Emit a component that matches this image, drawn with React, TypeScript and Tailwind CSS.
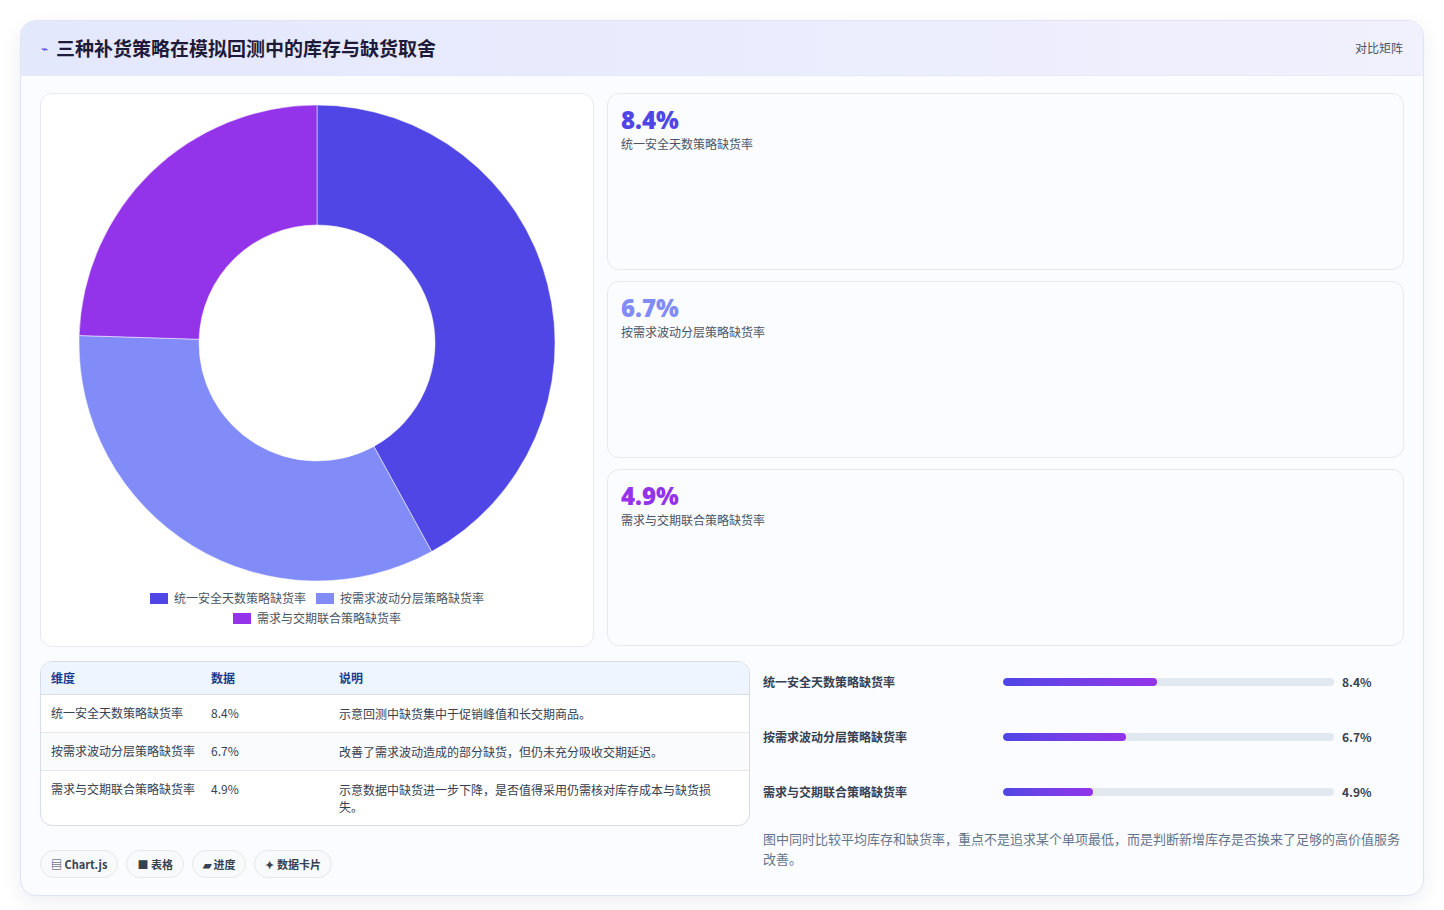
import React from "react"

const font = { fontFamily: '"Noto Sans CJK SC", "Noto Sans", sans-serif' }

const data = [
  { label: "统一安全天数策略缺货率", v: 8.4, color: "#4f46e5", note: "示意回测中缺货集中于促销峰值和长交期商品。" },
  { label: "按需求波动分层策略缺货率", v: 6.7, color: "#818cf8", note: "改善了需求波动造成的部分缺货，但仍未充分吸收交期延迟。" },
  { label: "需求与交期联合策略缺货率", v: 4.9, color: "#9333ea", note: "示意数据中缺货进一步下降，是否值得采用仍需核对库存成本与缺货损失。" },
]

function Donut() {
  const total = data.reduce((s, d) => s + d.v, 0)
  const cx = 238, cy = 238, R = 238, r = 118
  let a = -Math.PI / 2
  const pt = (rad: number, ang: number) => [cx + rad * Math.cos(ang), cy + rad * Math.sin(ang)]
  return (
    <svg width="476" height="476" viewBox="0 0 476 476">
      {data.map((d) => {
        const s = a
        const e = a + (d.v / total) * Math.PI * 2
        a = e
        const large = e - s > Math.PI ? 1 : 0
        const [x1, y1] = pt(R, s), [x2, y2] = pt(R, e), [x3, y3] = pt(r, e), [x4, y4] = pt(r, s)
        return (
          <path key={d.label} fill={d.color} stroke="#fff" strokeWidth="0.5"
            d={`M${x1} ${y1} A${R} ${R} 0 ${large} 1 ${x2} ${y2} L${x3} ${y3} A${r} ${r} 0 ${large} 0 ${x4} ${y4} Z`} />
        )
      })}
    </svg>
  )
}

export default function App() {
  return (
    <div className="min-h-[910px] bg-white p-5" style={font}>
      <div className="rounded-2xl border border-[#dfe3f5] bg-[#fbfcff] shadow-[0_6px_20px_rgba(30,40,90,0.08)] overflow-hidden">
        <div className="h-[55px] flex items-center justify-between px-5 bg-gradient-to-r from-[#e4e8fd] to-[#f1f0fd] border-b border-[#e6e9f7]">
          <div className="flex items-center gap-2">
            <span className="text-[#4f46e5] text-xs">⌁</span>
            <h1 className="text-[19px] font-bold text-[#1e1b3a]">三种补货策略在模拟回测中的库存与缺货取舍</h1>
          </div>
          <span className="text-xs text-[#4b5563]">对比矩阵</span>
        </div>
        <div className="px-[19px] pt-[17px] pb-[17px]">
          <div className="flex gap-[13px]">
            <div className="w-[554px] h-[554px] shrink-0 rounded-xl border border-[#e6e9f2] bg-white flex flex-col items-center pt-[11px]">
              <Donut />
              <div className="mt-[9px] flex flex-wrap justify-center gap-x-2.5 gap-y-1 w-[360px] text-xs text-[#4b5563]">
                {data.map((d) => (
                  <span key={d.label} className="flex items-center gap-1.5">
                    <span className="w-[18px] h-[11px]" style={{ background: d.color }} />
                    {d.label}
                  </span>
                ))}
              </div>
            </div>
            <div className="flex-1 flex flex-col gap-[11px]">
              {data.map((d) => (
                <div key={d.label} className="h-[177px] rounded-xl border border-[#e6e9f2] bg-[#fbfcff] px-[13px] pt-2.5">
                  <div className="text-[24px] font-extrabold leading-8" style={{ color: d.color, fontFamily: '"Open Sans", sans-serif' }}>{d.v}%</div>
                  <div className="text-xs text-[#4b5563]">{d.label}</div>
                </div>
              ))}
            </div>
          </div>
          <div className="flex gap-[13px] mt-[14px]">
            <div className="w-[710px] shrink-0">
              <div className="rounded-xl border border-[#d8dcea] overflow-hidden bg-white text-xs">
                <div className="flex h-[33px] items-center bg-[#eff5ff] border-b border-[#d8dcea] font-bold text-[#1e3a8a]">
                  <div className="w-[170px] pl-2.5">维度</div>
                  <div className="w-[128px]">数据</div>
                  <div className="flex-1">说明</div>
                </div>
                {data.map((d, i) => (
                  <div key={d.label} className={`flex py-[10px] text-[#374151] ${i < 2 ? "border-b border-[#e5e7eb]" : ""} ${i === 1 ? "bg-[#fafbfd]" : ""}`}>
                    <div className="w-[170px] pl-2.5">{d.label}</div>
                    <div className="w-[128px]">{d.v}%</div>
                    <div className="flex-1 pr-6 leading-[17px]">{d.note}</div>
                  </div>
                ))}
              </div>
              <div className="flex gap-2 mt-[24px] text-[11px] font-bold text-[#374151]">
                {["▤ Chart.js", "■ 表格", "▰ 进度", "✦ 数据卡片"].map((t) => (
                  <span key={t} className="h-[28px] px-2.5 flex items-center rounded-full border border-[#e5e7eb] bg-[#f9fafb]">{t}</span>
                ))}
              </div>
            </div>
            <div className="flex-1 pt-[10px]">
              <div className="flex flex-col gap-[33px]">
                {data.map((d) => (
                  <div key={d.label} className="flex items-center h-[22px] text-xs font-bold text-[#374151]">
                    <div className="w-[240px]">{d.label}</div>
                    <div className="w-[331px] h-2 rounded-full bg-[#e2e8f0] overflow-hidden">
                      <div className="h-full rounded-full bg-gradient-to-r from-[#4f46e5] to-[#9333ea]" style={{ width: `${(d.v / 18) * 100}%` }} />
                    </div>
                    <div className="ml-2">{d.v}%</div>
                  </div>
                ))}
              </div>
              <p className="mt-[26px] text-[13px] leading-5 text-[#64748b]">图中同时比较平均库存和缺货率，重点不是追求某个单项最低，而是判断新增库存是否换来了足够的高价值服务改善。</p>
            </div>
          </div>
        </div>
      </div>
    </div>
  )
}
